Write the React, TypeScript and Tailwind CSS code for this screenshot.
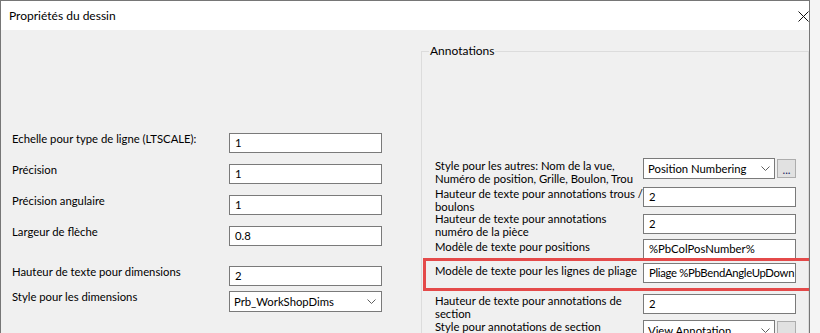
import React from "react";

const leftRows: { label: string; value: string; select?: boolean; mt: string }[] = [
  { label: "Echelle pour type de ligne (LTSCALE):", value: "1", mt: "mt-0" },
  { label: "Précision", value: "1", mt: "mt-[9px]" },
  { label: "Précision angulaire", value: "1", mt: "mt-[9px]" },
  { label: "Largeur de flèche", value: "0.8", mt: "mt-[9px]" },
  { label: "Hauteur de texte pour dimensions", value: "2", mt: "mt-[18px]" },
  { label: "Style pour les dimensions", value: "Prb_WorkShopDims", select: true, mt: "mt-[3px]" },
];

function Chevron() {
  return (
    <svg width="9" height="5" viewBox="0 0 9 5" className="shrink-0">
      <polyline points="0.5,0.5 4.5,4.5 8.5,0.5" fill="none" stroke="#5f5f5f" strokeWidth="1" />
    </svg>
  );
}

function TextBox({ value, className = "" }: { value: string; className?: string }) {
  return (
    <div
      className={`w-[153px] h-[20px] shrink-0 bg-white border border-[#7a7a7a] pl-[5px] leading-[18px] whitespace-nowrap overflow-hidden ${className}`}
    >
      {value}
    </div>
  );
}

function Combo({ value, width, className = "" }: { value: string; width: string; className?: string }) {
  return (
    <div
      className={`${width} h-[21px] shrink-0 bg-white border border-[#7a7a7a] pl-[4px] pr-[4px] flex items-center justify-between whitespace-nowrap overflow-hidden ${className}`}
    >
      <span className="leading-[18px]">{value}</span>
      <Chevron />
    </div>
  );
}

function DotsButton() {
  return (
    <div className="w-[19px] h-[19px] mt-[1px] ml-[2px] shrink-0 bg-[#e1e1e1] border border-[#adadad] flex items-end justify-center">
      <span className="leading-[12px] pb-[1px] text-[#1b1b5e]">...</span>
    </div>
  );
}

function RightRow({
  lines,
  labelMt,
  boxMt,
  rowMt,
  children,
  highlight,
}: {
  lines: string[];
  labelMt: string;
  boxMt: string;
  rowMt: string;
  children: React.ReactNode;
  highlight?: boolean;
}) {
  return (
    <div className={`relative flex items-start ${rowMt}`}>
      <div className={`w-[208px] shrink-0 leading-[13px] ${labelMt}`}>
        {lines.map((l) => (
          <div key={l} className="whitespace-nowrap">
            {l}
          </div>
        ))}
      </div>
      <div className={`flex items-start ${boxMt}`}>{children}</div>
      {highlight && (
        <div className="absolute -left-[12px] -top-[5px] -right-[5px] -bottom-[8px] border-[3px] border-[#e44a4a]" />
      )}
    </div>
  );
}

export default function App() {
  return (
    <div className="w-[820px] h-[333px] overflow-hidden bg-[#f4f4f4] flex font-['Lato',sans-serif] text-[11.3px] text-black">
      <div className="w-[810px] h-[333px] shrink-0 flex flex-col border-l border-t border-r border-[#767676] bg-[#f0f0f0]">
        {/* Title bar */}
        <div className="h-[29px] shrink-0 bg-white flex items-center justify-between pl-2">
          <span className="leading-4 text-[12px]">Propriétés du dessin</span>
          <svg width="11" height="11" viewBox="0 0 11 11" className="mt-[1px]">
            <path d="M0.5 0.5 L10.5 10.5 M10.5 0.5 L0.5 10.5" stroke="#111" strokeWidth="1" />
          </svg>
        </div>

        <div className="flex flex-1 min-h-0 overflow-hidden">
          {/* Left column */}
          <div className="w-[420px] shrink-0 pl-[11px] pt-[101px]">
            {leftRows.map((r) => (
              <div key={r.label} className={`flex items-start ${r.mt}`}>
                <div className="w-[217px] shrink-0 leading-4 whitespace-nowrap">{r.label}</div>
                {r.select ? (
                  <Combo value={r.value} width="w-[153px]" className="mt-[2px] pr-[5px]" />
                ) : (
                  <TextBox value={r.value} className="mt-[2px]" />
                )}
              </div>
            ))}
          </div>

          {/* Annotations group */}
          <fieldset className="w-[388px] h-[320px] shrink-0 self-start mt-[13px] border border-[#dcdcdc] p-0 m-0">
            <legend className="ml-[7px] px-[1px] leading-4 text-[12px]">Annotations</legend>
            <div className="pl-[13px] pt-[99px]">
              <RightRow
                lines={["Style pour les autres: Nom de la vue,", "Numéro de position, Grille, Boulon, Trou"]}
                rowMt="mt-0"
                labelMt="mt-[1px]"
                boxMt="mt-0"
              >
                <Combo value="Position Numbering" width="w-[132px]" />
                <DotsButton />
              </RightRow>
              <RightRow
                lines={["Hauteur de texte pour annotations trous /", "boulons"]}
                rowMt="mt-[2px]"
                labelMt="mt-0"
                boxMt="mt-0"
              >
                <TextBox value="2" />
              </RightRow>
              <RightRow
                lines={["Hauteur de texte pour annotations", "numéro de la pièce"]}
                rowMt="-mt-[1px]"
                labelMt="mt-0"
                boxMt="mt-[2px]"
              >
                <TextBox value="2" />
              </RightRow>
              <RightRow lines={["Modèle de texte pour positions"]} rowMt="mt-[1px]" labelMt="mt-[1px]" boxMt="mt-0">
                <TextBox value="%PbColPosNumber%" />
              </RightRow>
              <RightRow
                lines={["Modèle de texte pour les lignes de pliage"]}
                rowMt="mt-[4px]"
                labelMt="mt-[1px]"
                boxMt="mt-0"
                highlight
              >
                <TextBox value="Pliage %PbBendAngleUpDown" className="tracking-[-0.3px]" />
              </RightRow>
              <RightRow
                lines={["Hauteur de texte pour annotations de", "section"]}
                rowMt="mt-[11px]"
                labelMt="mt-0"
                boxMt="mt-0"
              >
                <TextBox value="2" />
              </RightRow>
              <RightRow lines={["Style pour annotations de section"]} rowMt="mt-0" labelMt="mt-0" boxMt="mt-0">
                <Combo value="View Annotation" width="w-[132px]" />
                <DotsButton />
              </RightRow>
            </div>
          </fieldset>
        </div>
      </div>
    </div>
  );
}
